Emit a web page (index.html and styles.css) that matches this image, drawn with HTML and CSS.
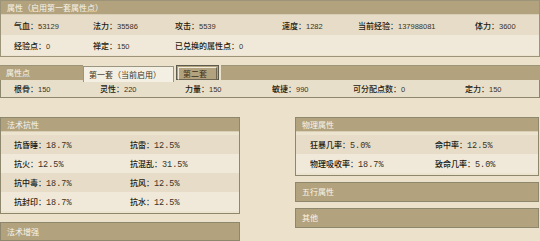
FILE: index.html
```html
<!DOCTYPE html>
<html lang="zh">
<head>
<meta charset="utf-8">
<link rel="stylesheet" href="styles.css">
</head>
<body>
<div class="page">
  <section class="panel p1">
    <div class="hd">属性（启用第一套属性点）</div>
    <div class="row dark g1">
      <span><b>气血：</b>53129</span><span><b>法力：</b>35586</span><span><b>攻击：</b>5539</span><span><b>速度：</b>1282</span><span><b>当前经验：</b>137988081</span><span><b>体力：</b>3600</span>
    </div>
    <div class="row light g1">
      <span><b>经验点：</b>0</span><span><b>禅定：</b>150</span><span class="wide"><b>已兑换的属性点：</b>0</span>
    </div>
  </section>

  <section class="panel p2">
    <div class="hd tabbar">
      <span class="hd-title">属性点</span>
      <span class="tab on">第一套（当前启用）</span>
      <span class="tab off"><span>第二套</span></span>
      <span class="fill"></span>
    </div>
    <div class="row dark g2">
      <span><b>根骨：</b>150</span><span><b>灵性：</b>220</span><span><b>力量：</b>150</span><span><b>敏捷：</b>990</span><span><b>可分配点数：</b>0</span><span><b>定力：</b>150</span>
    </div>
  </section>

  <div class="cols">
    <div class="col">
      <section class="panel box">
        <div class="hd">法术抗性</div>
        <div class="rows">
          <div class="row dark g3"><span><b>抗昏睡：</b><i>18.7%</i></span><span><b>抗雷：</b><i>12.5%</i></span></div>
          <div class="row light g3"><span><b>抗火：</b><i>12.5%</i></span><span><b>抗混乱：</b><i>31.5%</i></span></div>
          <div class="row dark g3"><span><b>抗中毒：</b><i>18.7%</i></span><span><b>抗风：</b><i>12.5%</i></span></div>
          <div class="row light g3"><span><b>抗封印：</b><i>18.7%</i></span><span><b>抗水：</b><i>12.5%</i></span></div>
        </div>
      </section>
      <section class="panel box closed">
        <div class="hd">法术增强</div>
      </section>
    </div>
    <div class="col right">
      <section class="panel box">
        <div class="hd">物理属性</div>
        <div class="rows">
          <div class="row dark g4"><span><b>狂暴几率：</b><i>5.0%</i></span><span><b>命中率：</b><i>12.5%</i></span></div>
          <div class="row light g4"><span><b>物理吸收率：</b><i>18.7%</i></span><span><b>致命几率：</b><i>5.0%</i></span></div>
        </div>
      </section>
      <section class="panel box closed">
        <div class="hd">五行属性</div>
      </section>
      <section class="panel box closed">
        <div class="hd">其他</div>
      </section>
    </div>
  </div>
</div>
</body>
</html>
```

FILE: styles.css
```css
html, body {
  margin: 0;
  padding: 0;
  background: #ece2cc;
}
body {
  width: 540px;
  height: 241px;
  overflow: hidden;
  font-family: "Noto Sans CJK SC", "Liberation Sans", sans-serif;
  font-size: 8px;
  color: #3a3020;
}
.page {
  display: flex;
  flex-direction: column;
}
.panel {
  border: 1px solid #8d876e;
  background: #ede4d0;
}
.hd {
  height: 13px;
  line-height: 13px;
  background: #b2a37e;
  color: #faf5ea;
  padding-left: 6px;
  font-size: 8px;
  border-bottom: 1px solid #d9cfb6;
}
.row {
  height: 20px;
  display: grid;
  align-items: center;
  padding-left: 13px;
  white-space: nowrap;
}
.row span {
  font-family: "Liberation Sans", sans-serif;
  font-size: 7.5px;
  color: #3a3225;
}
.row b {
  font-weight: 500;
  color: #1c180f;
  font-family: "Noto Sans CJK SC", sans-serif;
  font-size: 8px;
}
.row i {
  font-style: normal;
  font-family: "Liberation Mono", monospace;
  font-size: 8.5px;
}
.dark { background: #e6dcc8; }
.light { background: #f0e9d9; }

.p1 {
  border-color: #9b9479;
  padding-bottom: 1px;
}
.g1 { grid-template-columns: 79px 82px 107px 76px 117px 1fr; }
.g1 .wide { grid-column: span 2; }

.p2 {
  margin-top: 8px;
  background: transparent;
  border: none;
}
.tabbar {
  display: flex;
  align-items: flex-end;
  padding-left: 0;
  height: 15px;
  line-height: normal;
  background: transparent;
  border-bottom: none;
}
.hd-title {
  width: 77px;
  height: 14px;
  line-height: 14px;
  padding-left: 6px;
  background: #b2a37e;
  border-top: 1px solid #9b9479;
}
.tab {
  height: 16px;
  line-height: 15px;
  box-sizing: border-box;
  margin-bottom: -2px;
}
.tab.on {
  width: 91px;
  background: #f4efe3;
  color: #3a3020;
  border: 1px solid #9a9580;
  border-bottom: none;
  padding-left: 5px;
  position: relative;
  z-index: 1;
}
.tab.off {
  width: 43px;
  margin-left: 2px;
  background: #b2a37e;
  border: 1px solid #5e5a4c;
  padding: 1px;
  margin-bottom: 0;
  height: 15px;
}
.tab.off span {
  display: block;
  height: 11px;
  line-height: 11px;
  border: 1px solid #f0e9d9;
  border-right-color: #6d6753;
  border-bottom-color: #6d6753;
  padding-left: 4px;
  color: #3a3020;
}
.fill {
  flex: 1;
  height: 14px;
  margin-left: 2px;
  background: #b2a37e;
  border-top: 1px solid #9b9479;
}
.p2 .row {
  border: 1px solid #8d876e;
  border-top: none;
  height: 17px;
  background: #e8dfcb;
}
.g2 { grid-template-columns: 86px 85px 87px 81px 112px 1fr; }

.cols {
  margin-top: 19px;
  display: flex;
  align-items: flex-start;
}
.col {
  width: 240px;
  display: flex;
  flex-direction: column;
}
.col.right {
  width: 244px;
  margin-left: 55px;
}
.box {
  box-sizing: border-box;
}
.box .rows {
  padding: 3px 0 2px;
}
.box .row { height: 19px; }
.g3 { grid-template-columns: 116px 1fr; }
.g4 { grid-template-columns: 125px 1fr; padding-left: 14px; }
.col .box + .box { margin-top: 8px; }
.col.right .box + .box { margin-top: 6px; }
.closed .hd {
  height: 17px;
  line-height: 17px;
  border-bottom: none;
}
.right .closed .hd { height: 18px; line-height: 18px; }
```
